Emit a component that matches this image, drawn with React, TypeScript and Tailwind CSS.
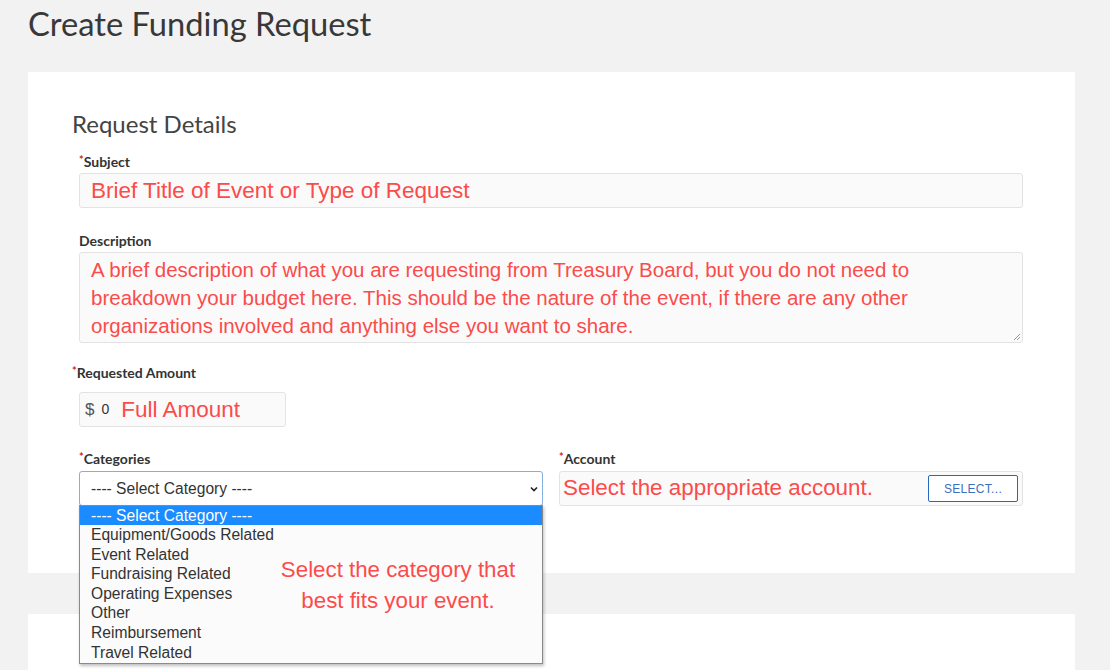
import React from "react";

const lato = { fontFamily: 'Lato, "Open Sans", sans-serif' };
const arial = { fontFamily: '"Liberation Sans", Arial, sans-serif' };

function Label({ children, className = "" }: { children: React.ReactNode; className?: string }) {
  return (
    <div className={"text-[14px] leading-[18px] font-bold text-[#333] " + className} style={lato}>
      <span className="text-[#d21f1f] text-[11px] align-top leading-[14px]">*</span>
      {children}
    </div>
  );
}

const options = [
  "Equipment/Goods Related",
  "Event Related",
  "Fundraising Related",
  "Operating Expenses",
  "Other",
  "Reimbursement",
  "Travel Related",
];

export default function App() {
  return (
    <div className="min-h-[670px] w-[1110px] bg-[#f2f2f2] overflow-hidden">
      <h1 className="pl-[28px] pt-[4px] h-[72px] text-[32.7px] leading-[40px] text-[#383838]" style={lato}>
        Create Funding Request
      </h1>
      <div className="ml-[28px] w-[1047px] bg-white pt-[37px] pb-[67px] pl-[44px] pr-[52px]">
        <h2 className="text-[24px] leading-[30px] text-[#444]" style={lato}>
          Request Details
        </h2>
        <div className="pl-[7px]">
          <Label className="mt-[14px]">Subject</Label>
          <div
            className="mt-[2px] h-[35px] rounded-[3px] border border-[#e3e3e3] bg-[#fafafa] pl-[11px] pt-[1px] flex items-center text-[22.5px] text-[#fb4b4b]"
            style={arial}
          >
            Brief Title of Event or Type of Request
          </div>

          <div className="mt-[24px] text-[14px] leading-[18px] font-bold text-[#333]" style={lato}>
            Description
          </div>
          <div
            className="relative mt-[2px] h-[91px] rounded-[3px] border border-[#e3e3e3] bg-[#fafafa] pl-[11px] pt-[3px] text-[20.5px] leading-[28px] text-[#fb4b4b]"
            style={arial}
          >
            A brief description of what you are requesting from Treasury Board, but you do not need to
            <br />
            breakdown your budget here. This should be the nature of the event, if there are any other
            <br />
            organizations involved and anything else you want to share.
            <svg className="absolute right-[1px] bottom-[1px]" width="9" height="9" viewBox="0 0 9 9">
              <path d="M8 2 L2 8 M8 5 L5 8" stroke="#999" strokeWidth="1" />
            </svg>
          </div>
        </div>

        <Label className="mt-[21px]">Requested Amount</Label>
        <div className="pl-[7px]">
          <div
            className="mt-[10px] w-[207px] h-[35px] rounded-[3px] border border-[#e3e3e3] bg-[#fafafa] flex items-center pl-[5px]"
            style={arial}
          >
            <span className="text-[17px] text-[#555]">$</span>
            <span className="ml-[7px] text-[14px] text-[#333]">0</span>
            <span className="ml-[12px] text-[22.5px] text-[#fb4b4b]">Full Amount</span>
          </div>

          <div className="mt-[23px] grid grid-cols-2 gap-[16px]">
            <div className="relative">
              <Label>Categories</Label>
              <div
                className="mt-[3px] h-[35px] rounded-[3px] border border-[#86aee0] bg-white flex items-center justify-between pl-[11px] pr-[3px] text-[15.6px] text-[#333]"
                style={arial}
              >
                <span>---- Select Category ----</span>
                <svg width="10" height="10" viewBox="0 0 10 10">
                  <path d="M2 3.5 L5 6.5 L8 3.5" fill="none" stroke="#222" strokeWidth="1.6" />
                </svg>
              </div>
              <div
                className="absolute left-0 top-[55px] w-full h-[159px] border border-[#8a8a8a] bg-[#fbfbfb] shadow-[1px_2px_3px_rgba(0,0,0,0.25)] text-[15.6px] text-[#333] z-10"
                style={arial}
              >
                <div className="h-[19px] bg-[#1a8cff] text-white pl-[11px] leading-[19px]">---- Select Category ----</div>
                {options.map((o) => (
                  <div key={o} className="h-[19.6px] pl-[11px] leading-[19.6px]">
                    {o}
                  </div>
                ))}
                <div className="absolute left-[190px] top-[48px] w-[256px] text-center text-[22.3px] leading-[31px] text-[#fb4b4b]">
                  Select the category that best fits your event.
                </div>
              </div>
            </div>
            <div>
              <Label>Account</Label>
              <div className="mt-[3px] h-[35px] rounded-[3px] border border-[#e3e3e3] bg-[#fafafa] flex items-center justify-between pl-[3px] pr-[4px]" style={arial}>
                <span className="text-[22.4px] text-[#fb4b4b] -mt-[2px]">Select the appropriate account.</span>
                <button className="w-[90px] h-[27px] rounded-[2px] border-[1.5px] border-[#2468c0] bg-white text-[12px] text-[#3b6fc0] tracking-[0.3px]">
                  SELECT...
                </button>
              </div>
            </div>
          </div>
        </div>
      </div>
      <div className="ml-[28px] mt-[41px] w-[1047px] h-[60px] bg-white" />
    </div>
  );
}
